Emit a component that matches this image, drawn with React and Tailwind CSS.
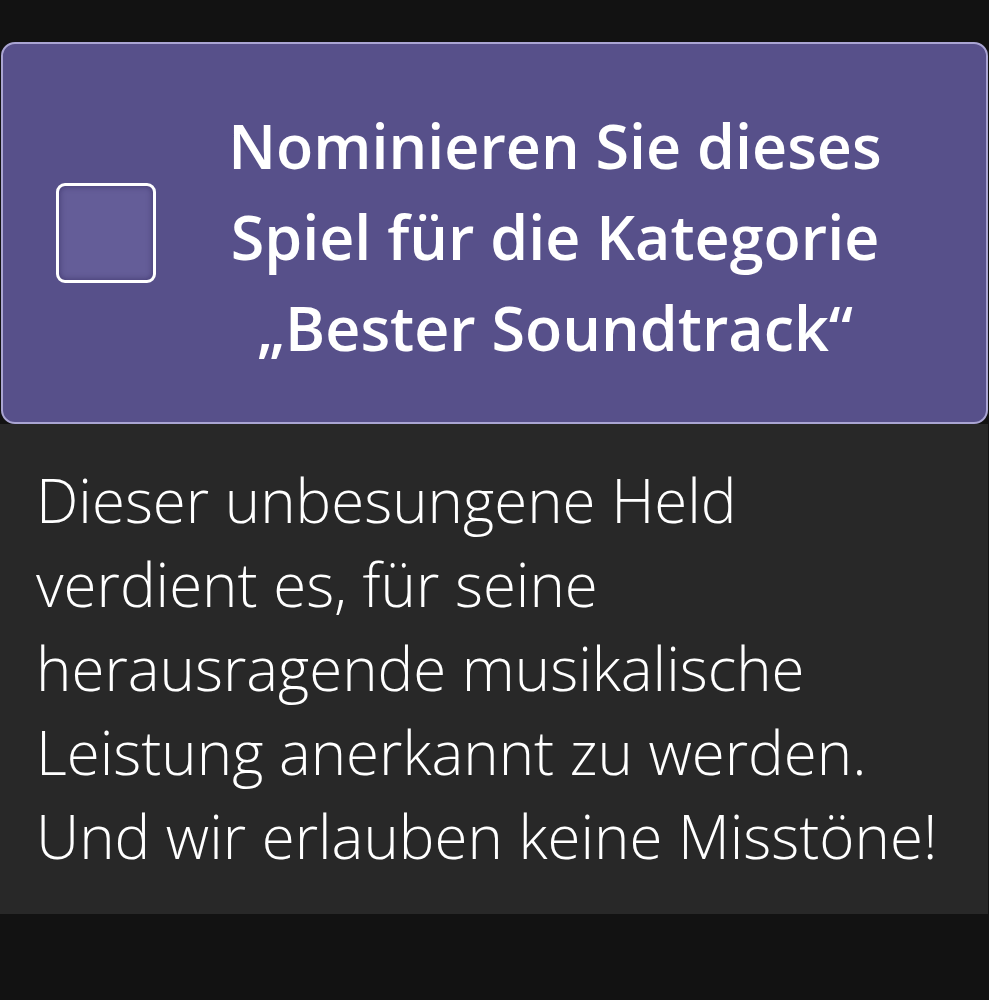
export default function App() {
  return (
    <div className="w-[989px] h-[1000px] bg-[#121212] pt-[42px] overflow-hidden" style={{ fontFamily: '"Open Sans", "Noto Sans", sans-serif' }}>
      <div className="w-[987px] ml-[1px]">
        <div className="h-[382px] rounded-[14px] border-2 border-[#aaa5d3] bg-[#57508a] flex items-center">
          <div className="ml-[53px] w-[100px] h-[100px] shrink-0 rounded-[9px] border-[3px] border-white bg-[#645d98] shadow-[inset_0_0_6px_rgba(40,30,80,0.6)]" />
          <div className="flex-1 mt-[6px] pr-[36px] pl-[4px] text-center text-white font-semibold text-[61px] leading-[91px] whitespace-nowrap">
            Nominieren Sie dieses<br />Spiel für die Kategorie<br />„Bester Soundtrack“
          </div>
        </div>
        <div className="-ml-[1px] w-[988px] h-[490px] bg-[#282828] pl-[36px] pt-[34px]">
          <p className="text-white font-light text-[60px] leading-[84px] whitespace-nowrap">
            Dieser unbesungene Held<br />verdient es, für seine<br />herausragende musikalische<br />Leistung anerkannt zu werden.<br />Und wir erlauben keine Misstöne!
          </p>
        </div>
      </div>
    </div>
  );
}
